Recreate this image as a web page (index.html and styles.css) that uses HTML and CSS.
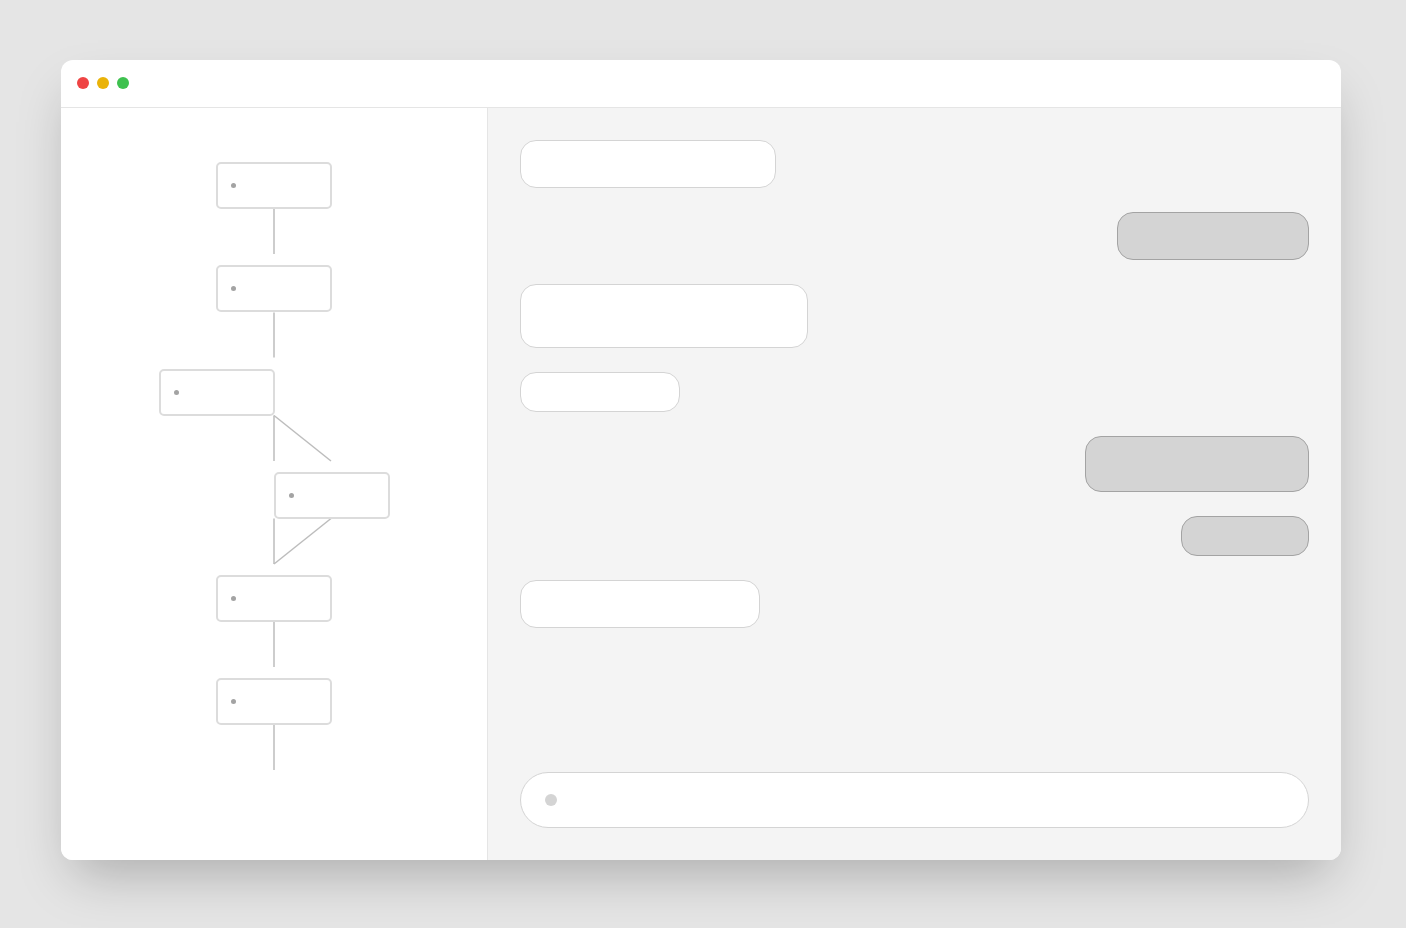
FILE: index.html
```html
<!DOCTYPE html>
<html>
<head>
<meta charset="utf-8">
<link rel="stylesheet" href="styles.css">
</head>
<body>
<div class="window">
  <div class="titlebar">
    <span class="light red"></span>
    <span class="light yellow"></span>
    <span class="light green"></span>
  </div>
  <div class="content">
    <div class="graph">
      <svg class="edges" width="426" height="752" viewBox="0 0 426 752">
        <g stroke="#bdbdbd" stroke-width="1.5" fill="none">
          <line x1="213" y1="101" x2="213" y2="146"/>
          <line x1="213" y1="204.5" x2="213" y2="249.5"/>
          <line x1="213" y1="307.5" x2="213" y2="353"/>
          <line x1="213" y1="307.5" x2="270" y2="353"/>
          <line x1="213" y1="410.5" x2="213" y2="456"/>
          <line x1="270" y1="410.5" x2="213" y2="456"/>
          <line x1="213" y1="514" x2="213" y2="559"/>
          <line x1="213" y1="617" x2="213" y2="662"/>
        </g>
      </svg>
      <div class="node n1"><span class="ndot"></span></div>
      <div class="node n2"><span class="ndot"></span></div>
      <div class="node n3"><span class="ndot"></span></div>
      <div class="node n4"><span class="ndot"></span></div>
      <div class="node n5"><span class="ndot"></span></div>
      <div class="node n6"><span class="ndot"></span></div>
    </div>
    <div class="chat">
      <div class="messages">
        <div class="bubble in w256 h48"></div>
        <div class="bubble out w192 h48"></div>
        <div class="bubble in w288 h64"></div>
        <div class="bubble in w160 h40"></div>
        <div class="bubble out w224 h56"></div>
        <div class="bubble out w128 h40"></div>
        <div class="bubble in w240 h48"></div>
      </div>
      <div class="composer"><span class="cdot"></span></div>
    </div>
  </div>
</div>
</body>
</html>
```

FILE: styles.css
```css
html, body {
  margin: 0;
  padding: 0;
  background: #e5e5e5;
  font-family: "Liberation Sans", Arial, sans-serif;
}
body {
  width: 1406px;
  height: 928px;
  overflow: hidden;
}
.window {
  margin: 60px 0 0 61px;
  width: 1280px;
  height: 800px;
  background: #ffffff;
  border-radius: 12px;
  overflow: hidden;
  box-shadow: 0 25px 50px -12px rgba(0, 0, 0, 0.25);
  display: flex;
  flex-direction: column;
}
.titlebar {
  height: 47px;
  border-bottom: 1px solid #e5e5e5;
  display: flex;
  align-items: center;
  gap: 8px;
  padding-left: 16px;
  padding-bottom: 1px;
  box-sizing: border-box;
  height: 48px;
  flex-shrink: 0;
}
.light {
  width: 12px;
  height: 12px;
  border-radius: 50%;
  display: block;
}
.red { background: #ef4444; }
.yellow { background: #eab308; }
.green { background: #3ec14f; }
.content {
  flex: 1;
  display: flex;
  min-height: 0;
}
.graph {
  width: 426px;
  border-right: 1px solid #e5e5e5;
  position: relative;
  flex-shrink: 0;
  background: #ffffff;
}
.edges {
  position: absolute;
  left: 0;
  top: 0;
}
.node {
  position: absolute;
  width: 116px;
  height: 47px;
  box-sizing: border-box;
  border: 2px solid #dcdcdc;
  border-radius: 5px;
  background: #ffffff;
  display: flex;
  align-items: center;
  padding-left: 13px;
}
.ndot {
  width: 5px;
  height: 5px;
  border-radius: 50%;
  background: #a3a3a3;
  display: block;
}
.n1 { left: 155px; top: 54px; }
.n2 { left: 155px; top: 157px; }
.n3 { left: 97.5px; top: 261px; }
.n4 { left: 212.5px; top: 364px; }
.n5 { left: 155px; top: 467px; }
.n6 { left: 155px; top: 570px; }
.chat {
  flex: 1;
  background: #f4f4f4;
  padding: 32px;
  display: flex;
  flex-direction: column;
  justify-content: space-between;
}
.messages {
  display: flex;
  flex-direction: column;
  gap: 24px;
}
.bubble {
  box-sizing: border-box;
  border-radius: 16px;
}
.bubble.in {
  align-self: flex-start;
  background: #ffffff;
  border: 1px solid #d4d4d4;
}
.bubble.out {
  align-self: flex-end;
  background: #d4d4d4;
  border: 1px solid #a3a3a3;
}
.w256 { width: 256px; }
.w192 { width: 192px; }
.w288 { width: 288px; }
.w160 { width: 160px; }
.w224 { width: 224px; }
.w128 { width: 128px; }
.w240 { width: 240px; }
.h48 { height: 48px; }
.h64 { height: 64px; }
.h40 { height: 40px; }
.h56 { height: 56px; }
.composer {
  height: 56px;
  box-sizing: border-box;
  border: 1px solid #d4d4d4;
  border-radius: 28px;
  background: #ffffff;
  display: flex;
  align-items: center;
  padding-left: 24px;
}
.cdot {
  width: 12px;
  height: 12px;
  border-radius: 50%;
  background: #d4d4d4;
  display: block;
}
```
